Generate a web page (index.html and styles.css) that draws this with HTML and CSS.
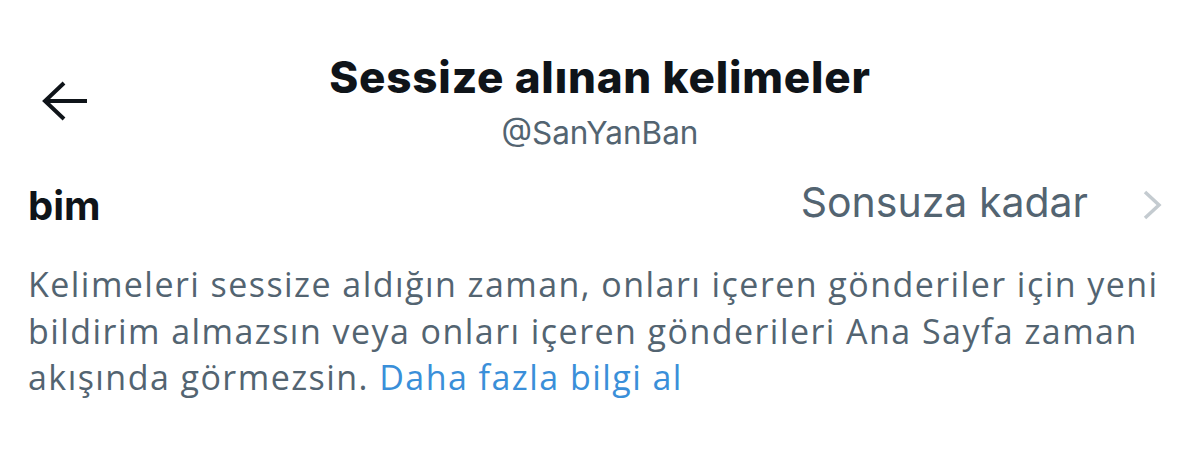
FILE: index.html
```html
<!DOCTYPE html>
<html lang="tr">
<head>
    <meta charset="UTF-8">
    <meta name="viewport" content="width=device-width, initial-scale=1.0">
    <title>Sessize alınan kelimeler</title>
    <link rel="stylesheet" href="styles.css">
</head>
<body>
    <section class="page">
        <header class="topbar">
            <button class="back" aria-label="Geri">
                <svg viewBox="0 0 48 40" width="48" height="40">
                    <path d="M24 2 L5 20 L24 38 M5 20 H47" fill="none" stroke="#0f1419" stroke-width="4"/>
                </svg>
            </button>
            <div class="titles">
                <h1>Sessize alınan kelimeler</h1>
                <div class="handle">@SanYanBan</div>
            </div>
            <div></div>
        </header>

        <ul class="words">
            <li class="word">
                <span class="term">bim</span>
                <span class="duration">Sonsuza kadar</span>
                <svg class="chevron" viewBox="0 0 20 30" width="20" height="30">
                    <path d="M3 2 L17 15 L3 28" fill="none" stroke="#c4cbd0" stroke-width="3.5"/>
                </svg>
            </li>
        </ul>

        <p class="note">
            Kelimeleri sessize aldığın zaman, onları içeren gönderiler için yeni
            bildirim almazsın veya onları içeren gönderileri Ana Sayfa zaman
            akışında görmezsin. <a href="#">Daha fazla bilgi al</a>
        </p>
    </section>
</body>
</html>
```

FILE: styles.css
```css
* {
    margin: 0;
    padding: 0;
    box-sizing: border-box;
}
ul, ol {
    list-style: none;
}
body {
    background: #fff;
    color: #0f1419;
    font-family: Inter, "Noto Sans", sans-serif;
}
.page {
    width: 1200px;
    height: 460px;
    overflow: hidden;
}
.topbar {
    display: grid;
    grid-template-columns: 1fr auto 1fr;
    align-items: center;
    padding-top: 51px;
}
.back {
    justify-self: start;
    margin-left: 40px;
    width: 48px;
    height: 40px;
    border: none;
    background: none;
    display: flex;
}
.titles {
    text-align: center;
}
.titles h1 {
    font-size: 44px;
    font-weight: 800;
    line-height: 52px;
    letter-spacing: 0.8px;
}
.handle {
    margin-top: 12px;
    font-size: 31.5px;
    line-height: 36px;
    color: #536471;
}
.words {
    margin-top: 26px;
}
.word {
    display: flex;
    align-items: center;
    padding: 0 38px 0 28px;
    height: 56px;
}
.term {
    font-size: 40px;
    font-weight: 700;
    flex: 1;
}
.duration {
    font-size: 41px;
    color: #536471;
    margin-right: 54px;
    margin-bottom: 6px;
}
.chevron {
    display: block;
}
.note {
    margin-top: 28px;
    padding: 0 28px;
    font-family: "Open Sans", "Noto Sans", sans-serif;
    font-size: 34px;
    line-height: 46.5px;
    letter-spacing: 1.45px;
    color: #536471;
}
.note a {
    color: #3a8fd9;
    text-decoration: none;
}
```
